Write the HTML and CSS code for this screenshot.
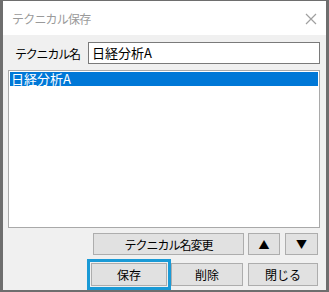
FILE: index.html
```html
<!DOCTYPE html>
<html lang="ja">
<head>
    <meta charset="UTF-8">
    <title>テクニカル保存</title>
    <link rel="stylesheet" href="styles.css">
</head>
<body>
    <div class="window">
        <div class="titlebar">
            <span class="title">テクニカル保存</span>
            <span class="close">
                <svg width="12" height="12" viewBox="0 0 12 12"><path d="M1 1L11 11M11 1L1 11" stroke="#a0a0a0" stroke-width="1.2"/></svg>
            </span>
        </div>
        <div class="content">
            <div class="name-row">
                <span class="label">テクニカル名</span>
                <div class="input">日経分析A</div>
            </div>
            <div class="list">
                <div class="item selected">日経分析A</div>
            </div>
            <div class="btn-row">
                <div class="btn wide">テクニカル名変更</div>
                <div class="btn up">▲</div>
                <div class="btn down">▼</div>
            </div>
            <div class="btn-row bottom">
                <div class="focus"><div class="btn">保存</div></div>
                <div class="btn del">削除</div>
                <div class="btn last">閉じる</div>
            </div>
        </div>
    </div>
</body>
</html>
```

FILE: styles.css
```css
body {
    margin: 0;
    width: 329px;
    height: 292px;
    font-family: "Noto Sans CJK JP", "DejaVu Sans", sans-serif;
    font-size: 12px;
    color: #000;
    background: #6e6e6e;
}

.window {
    margin: 1px 3px 0 3px;
    height: 289px;
    background: #f0f0f0;
    display: flex;
    flex-direction: column;
}

.titlebar {
    height: 34px;
    background: #fff;
    display: flex;
    align-items: center;
    justify-content: space-between;
    padding: 0 9px 0 9px;
}

.title {
    color: #9a9a9a;
    font-size: 12px;
    letter-spacing: -0.8px;
}

.close {
    display: flex;
    margin-top: 1px;
}

.content {
    padding: 6px 6px 0 5px;
}

.name-row {
    display: flex;
    align-items: center;
    height: 24px;
}

.label {
    width: 73px;
    padding-left: 7px;
    letter-spacing: -1.2px;
}

.input {
    flex: 1;
    height: 20px;
    border: 1px solid #7a7a7a;
    background: #fff;
    font-size: 13px;
    line-height: 20px;
    padding-left: 3px;
}

.list {
    margin-top: 5px;
    height: 154px;
    border: 1px solid #a9a9a9;
    background: #fff;
    padding: 1px;
}

.item {
    height: 14px;
    line-height: 14px;
    font-size: 13px;
    padding-left: 1px;
}

.item.selected {
    background: #0078d7;
    color: #fff;
}

.btn-row {
    display: flex;
    justify-content: flex-end;
    align-items: center;
    margin-top: 5px;
    padding-right: 2px;
}

.btn {
    box-sizing: border-box;
    height: 22px;
    border: 1px solid #adadad;
    background: #e1e1e1;
    display: flex;
    align-items: center;
    justify-content: center;
    font-size: 12px;
}

.btn.wide {
    width: 151px;
    letter-spacing: -1px;
}

.btn.up {
    width: 32px;
    margin-left: 4px;
    font-size: 11px;
}

.btn.down {
    width: 33px;
    margin-left: 5px;
    font-size: 11px;
}

.btn-row.bottom {
    margin-top: 4px;
}

.focus {
    border: 3px solid #1a9ad6;
    padding: 1px;
}

.focus .btn {
    width: 76px;
    height: 23px;
}

.btn.del {
    width: 72px;
    height: 23px;
}

.btn.last {
    width: 70px;
    height: 23px;
    margin-left: 5px;
}
```
